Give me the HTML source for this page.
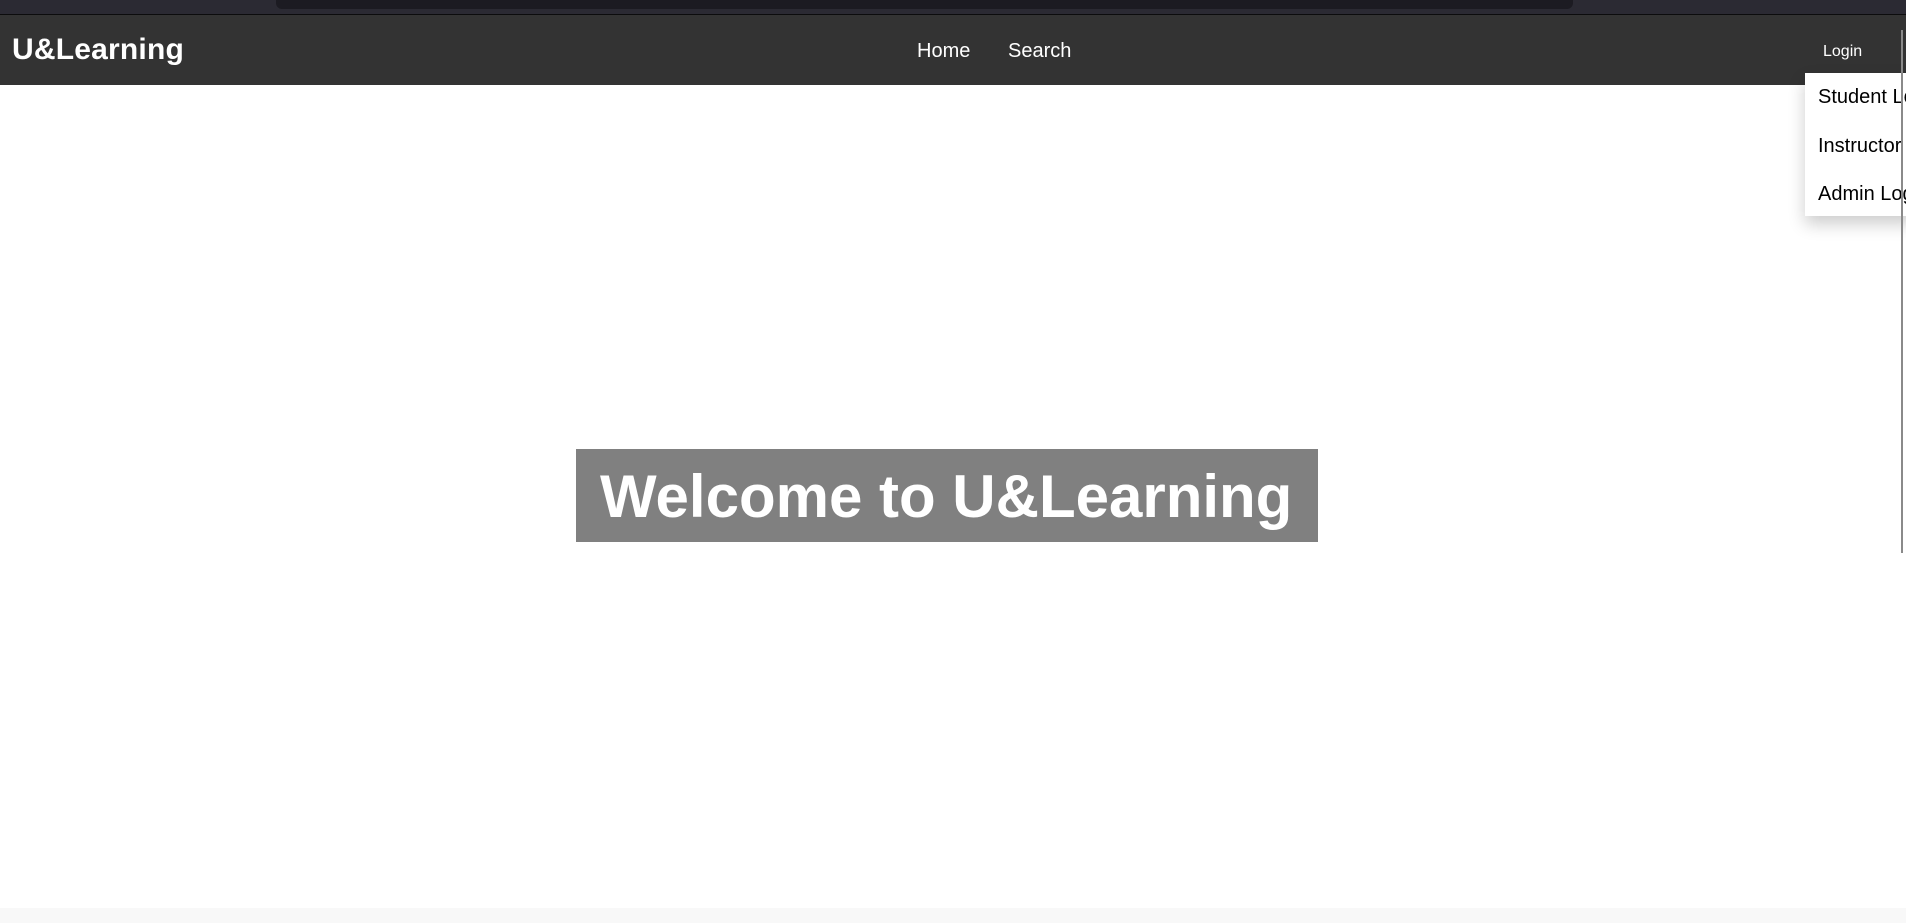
<!DOCTYPE html>
<html><head><meta charset="utf-8"><style>
*{margin:0;padding:0;box-sizing:border-box}
html,body{width:1906px;height:923px;overflow:hidden;background:#fff;font-family:"Liberation Sans",Arial,sans-serif;position:relative}
.top{position:absolute;left:0;top:0;width:1906px;height:14px;background:#2b2a33}
.topbar{position:absolute;left:276px;top:0;width:1297px;height:9px;background:#1c1b22;border-radius:0 0 6px 6px}
.line{position:absolute;left:0;top:14px;width:1906px;height:1px;background:#0c0c0d}
.nav{position:absolute;left:0;top:15px;width:1906px;height:70px;background:#333}
.logo{position:absolute;left:12px;top:18px;color:#fff;font-weight:bold;font-size:30px;line-height:34px;letter-spacing:0.2px}
.nl{position:absolute;top:24px;color:#fff;font-size:20px;line-height:24px}
.login{position:absolute;left:1823px;top:27px;color:#fff;font-size:16px;line-height:20px}
.dd{position:absolute;left:1805px;top:73px;width:110px;height:143px;background:#fff;box-shadow:0 8px 16px rgba(0,0,0,.2)}
.dd div{position:absolute;left:13px;font-size:20px;line-height:24px;color:#000;white-space:nowrap}
.vl{position:absolute;left:1901px;top:30px;width:2px;height:523px;background:#8a8a8a}
.hero{position:absolute;left:576px;top:449px;width:742px;height:93px;background:#808080}
.hero h1{position:absolute;left:24px;top:13px;color:#fff;font-size:60px;font-weight:bold;line-height:70px;white-space:nowrap}
.foot{position:absolute;left:0;top:908px;width:1906px;height:15px;background:#f8f8f8}
</style></head><body>
<div class="top"><div class="topbar"></div></div>
<div class="line"></div>
<div class="nav">
<div class="logo">U&amp;Learning</div>
<div class="nl" style="left:917px">Home</div>
<div class="nl" style="left:1008px">Search</div>
<div class="login">Login</div>
</div>
<div class="dd">
<div style="top:12px">Student Login</div>
<div style="top:61px">Instructor Login</div>
<div style="top:109px">Admin Login</div>
</div>
<div class="vl"></div>
<div class="hero"><h1>Welcome to U&amp;Learning</h1></div>
<div class="foot"></div>
</body></html>
